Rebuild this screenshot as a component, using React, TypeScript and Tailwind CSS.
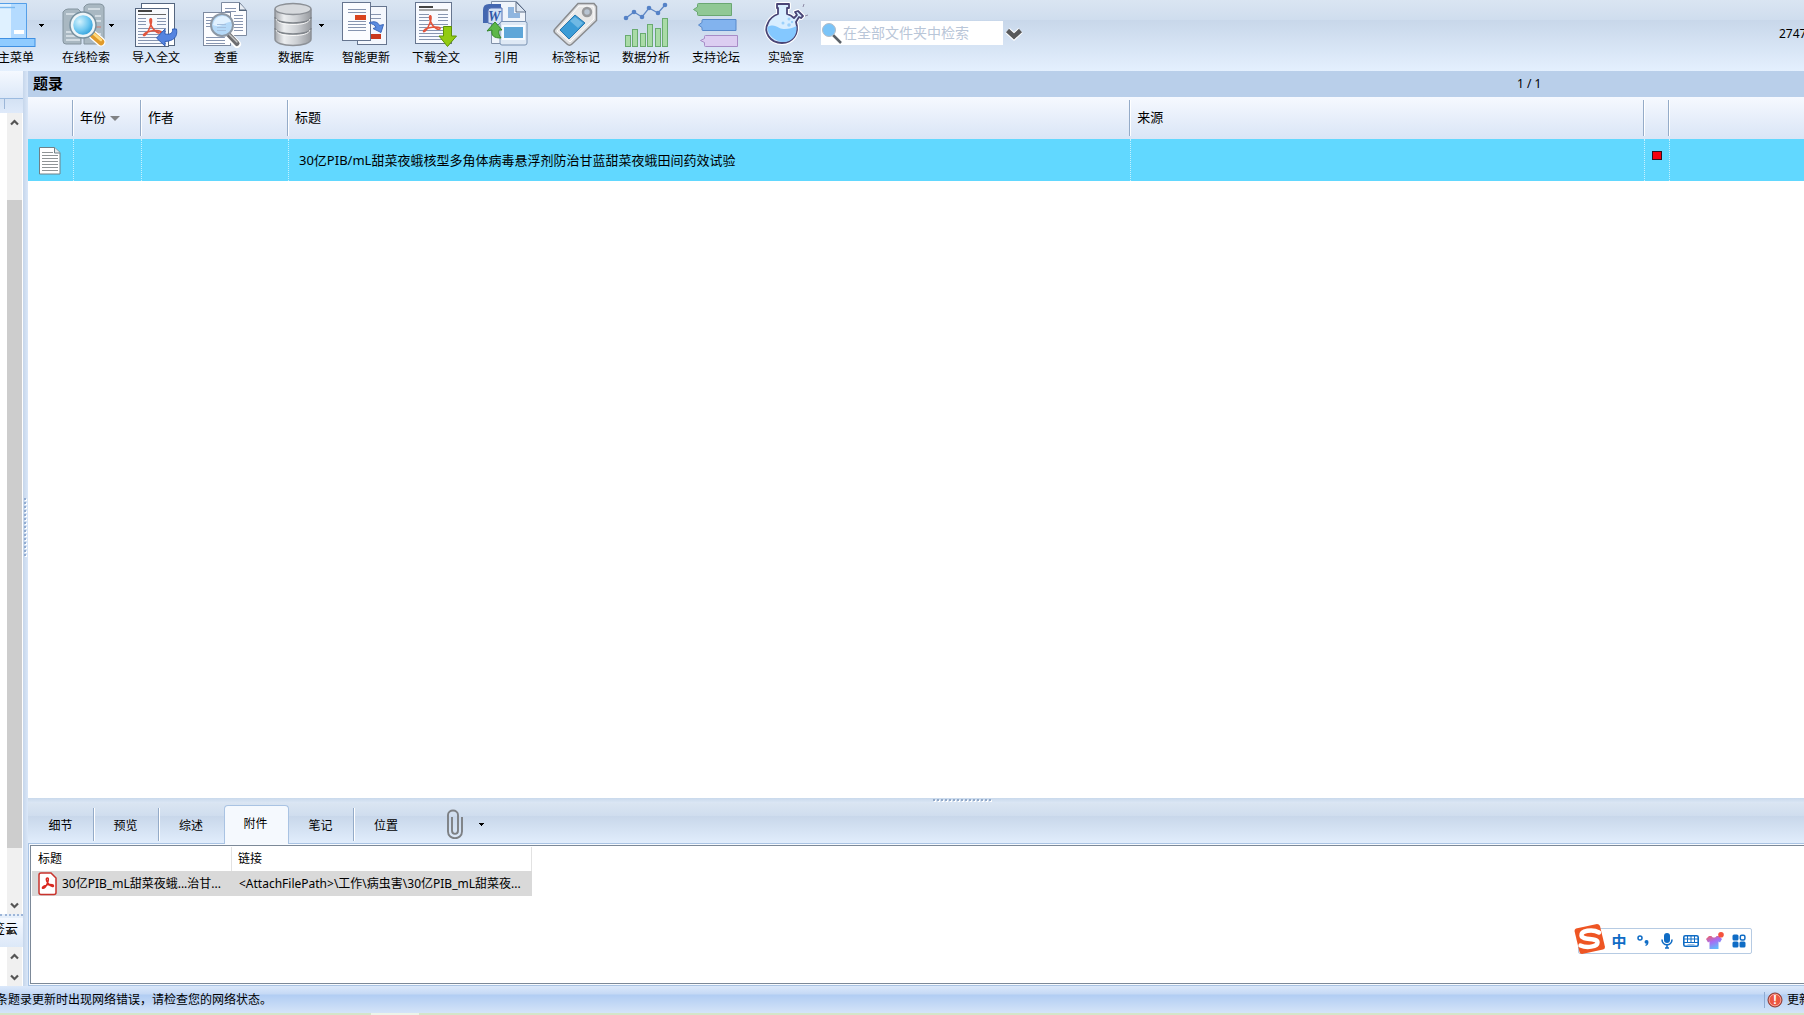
import { useId } from "react";
import type { ReactNode } from "react";

function Icon({ children }: { children: ReactNode }) {
  return (
    <svg viewBox="0 0 48 48" className="h-12 w-12 shrink-0" aria-hidden="true">
      {children}
    </svg>
  );
}

function Caret() {
  return (
    <svg viewBox="0 0 5 3" className="h-[3px] w-[5px] shrink-0 self-center" shapeRendering="crispEdges" aria-hidden="true">
      <path d="M0 0h5v1H0zM1 1h3v1H1zM2 2h1v1H2z" fill="#000" />
    </svg>
  );
}

function AcrobatMark({ x, y, s = 1, color = "#e2543c" }: { x: number; y: number; s?: number; color?: string }) {
  return (
    <g transform={`translate(${x} ${y}) scale(${s})`} fill="none" stroke={color} strokeLinecap="round" strokeLinejoin="round">
      <path d="M8 0.8c-1.6-.4-1.2 2.6-.4 5.2 1 3 3.500 6.400 6.400 8.200 2.800 1.600 5 .4 3.600-.8-2.200-1.400-8.800-1-13 .6-3.400 1.300-5 3.400-3.600 3.600 1.800 0 4.400-4.600 6-8.600C8.600 5.500 9 1.200 8 .8z" strokeWidth="1.600" />
    </g>
  );
}

/* Three-lobed loop mark used on the PDF file badge. */
function PdfBadge() {
  return (
    <svg viewBox="0 0 19 24" className="h-6 w-[19px] shrink-0" aria-hidden="true">
      <path d="M3 1h10L18 6V20.500q0 2-2 2H3q-2 0-2-2V3q0-2 2-2z" fill="#fff" stroke="#c9332c" strokeWidth="1.500" />
      <path
        d="M9.500 6c-1.800 0-1.300 2.600.2 4.800 1.300 1.900 3 3.600 4.700 3.800 1.500.1 1.400-1.500-.2-1.800-2.600-.5-6 .1-8.300 1.300-1.800.9-1.900 2.400-.7 2.200 1.500-.3 3.600-3.400 4.500-5.800.7-2 1-4.500-.2-4.500z"
        fill="none"
        stroke="#d9281f"
        strokeWidth="1.500"
        strokeLinejoin="round"
      />
    </svg>
  );
}

function MainMenuIcon() {
  return (
    <Icon>
      <path d="M0 3h36v36H0z" fill="#b4dbff" />
      <path d="M0 3h20v36H0z" fill="#dff1ff" />
      <path d="M0 3.500h35.500v36" fill="none" stroke="#559fe8" />
      <path d="M9 7.500h15" stroke="#7bb8ef" strokeWidth="1.400" />
      <rect x="23" y="30" width="10" height="4" fill="#fff" />
      <rect x="-2" y="38.500" width="46" height="8" fill="#8fcbff" stroke="#3f90e2" />
    </Icon>
  );
}

function OnlineSearchIcon() {
  const g = useId();
  return (
    <Icon>
      <defs>
        <radialGradient id={g} cx="0.350" cy="0.350" r="0.700">
          <stop offset="0" stopColor="#d3f2fd" />
          <stop offset="0.600" stopColor="#6cc6f0" />
          <stop offset="1" stopColor="#2a9bd8" />
        </radialGradient>
      </defs>
      <path d="M2 12q2-3 5-3h10l3 3v32H5q-3 0-3-3z" fill="#a9b8c2" stroke="#84949f" />
      <path d="M23 7q2-3 5-3h11q3 0 4 3v34q0 2-3 3H23z" fill="#a9b8c2" stroke="#84949f" />
      <path d="M5 14h11M5 32h8M5 36h12M5 40h14M27 9h12M34 16h6M35 21h5M35 34h5" stroke="#dfe8ee" strokeWidth="1.600" />
      <path d="M35 27h5" stroke="#d0786c" />
      <path d="M32 35l8 7" stroke="#fff" strokeWidth="9" strokeLinecap="round" />
      <path d="M32 35l8 7" stroke="#e09a2b" strokeWidth="6.500" strokeLinecap="round" />
      <path d="M33 34l7 6" stroke="#ffd97c" strokeWidth="2.500" strokeLinecap="round" />
      <circle cx="22" cy="25" r="11.500" fill="none" stroke="#76909f" strokeWidth="4.500" />
      <circle cx="22" cy="25" r="11" fill={`url(#${g})`} stroke="#eef5f8" strokeWidth="2.500" />
    </Icon>
  );
}

function PaperLines({ x, y, w, n, gap = 3 }: { x: number; y: number; w: number; n: number; gap?: number }) {
  return (
    <g stroke="#8795b0">
      {Array.from({ length: n }, (_, i) => (
        <path key={i} d={`M${x} ${y + i * gap + 0.5}h${w}`} />
      ))}
    </g>
  );
}

function ImportIcon() {
  return (
    <Icon>
      <rect x="10.500" y="3.500" width="33" height="42" fill="#fff" stroke="#55667f" />
      <rect x="4.500" y="8.500" width="33" height="38" fill="#f7f9fd" stroke="#55667f" />
      <path d="M7 11h14" stroke="#444" strokeWidth="2" />
      <path d="M7 14.500h28" stroke="#666" />
      <PaperLines x={7} y={18} w={8} n={3} />
      <PaperLines x={26} y={18} w={9} n={3} />
      <PaperLines x={7} y={28} w={28} n={6} />
      <AcrobatMark x={12} y={18} />
      <path d="M25.500 38l8.500-9v5c5.500 1 8-1 7.500-5h4c1.500 8-3 12-11.500 12.500V46z" fill="#5584e0" stroke="#3360b8" strokeLinejoin="round" />
    </Icon>
  );
}

function DuplicateIcon() {
  return (
    <Icon>
      <path d="M20.500 2.500h18l7 8v25h-25z" fill="#fdfdff" stroke="#7d8aa0" />
      <path d="M38 2v9h8z" fill="#55667c" />
      <path d="M39 3.500v6h5.500z" fill="#e9eef5" />
      <PaperLines x={24} y={8} w={11} n={2} />
      <PaperLines x={33} y={15} w={9} n={6} />
      <rect x="2.500" y="12.500" width="27" height="33" fill="#fdfdff" stroke="#7d8aa0" />
      <PaperLines x={5} y={17} w={10} n={4} />
      <PaperLines x={5} y={37} w={19} n={3} />
      <path d="M27 35l9 9" stroke="#fff" strokeWidth="8" strokeLinecap="round" />
      <path d="M28 35l8 8.500" stroke="#6d6d70" strokeWidth="5" strokeLinecap="round" />
      <path d="M28 34l8 8" stroke="#c4c4c4" strokeWidth="1.500" strokeLinecap="round" />
      <circle cx="21" cy="25" r="11" fill="#b5d9f8" stroke="#8d98a5" strokeWidth="2" />
      <path d="M12 25c1-6 5-9 10-9 4 0 7 3 8 6-6-1-10 7-18 3z" fill="#e1f1ff" />
      <path d="M16 24.500h9M16 27.500h9M16 30.500h9" stroke="#a5bfdd" />
    </Icon>
  );
}

function DatabaseIcon() {
  const g = useId();
  return (
    <Icon>
      <defs>
        <linearGradient id={g}>
          <stop offset="0" stopColor="#a6a9ae" />
          <stop offset="0.250" stopColor="#eceef0" />
          <stop offset="0.600" stopColor="#cdd0d4" />
          <stop offset="1" stopColor="#989ba0" />
        </linearGradient>
      </defs>
      <path d="M4 10v29c0 4 8 6.500 18 6.500s18-2.500 18-6.500V10z" fill={`url(#${g})`} stroke="#8c9096" strokeWidth="1.500" />
      <ellipse cx="22" cy="9" rx="18" ry="5.500" fill="#d6d9dd" stroke="#8c9096" strokeWidth="1.500" />
      <path d="M4 17c0 4 8 6 18 6s18-2 18-6M4 28c0 4 8 6 18 6s18-2 18-6" fill="none" stroke="#80858b" strokeWidth="1.500" />
      <path d="M5 19c1 4 8 5.500 17 5.500s16-1.500 17-5.500M5 30c1 4 8 5.500 17 5.500s16-1.500 17-5.500" fill="none" stroke="#f8f8f8" />
    </Icon>
  );
}

function UpdateIcon() {
  return (
    <Icon>
      <rect x="16.500" y="6.500" width="29" height="38" fill="#f4f7fd" stroke="#66758f" />
      <PaperLines x={30} y={14} w={10} n={2} gap={4} />
      <rect x="30" y="34" width="10" height="5" fill="#c9381c" />
      <rect x="1.500" y="2.500" width="28" height="38" fill="#fbfcff" stroke="#66758f" />
      <PaperLines x={7} y={9} w={18} n={2} />
      <rect x="14" y="15" width="11" height="5" fill="#d9441f" />
      <PaperLines x={7} y={21} w={18} n={4} />
      <path d="M28 23c5-2.500 9-1 10.500 2.500l4-1-2.500 8-8-4 3-1c-1-2.500-3-3.500-7-4.500z" fill="#5a8be0" stroke="#3e69ba" strokeLinejoin="round" />
    </Icon>
  );
}

function DownloadIcon() {
  return (
    <Icon>
      <rect x="4.500" y="2.500" width="36" height="41" fill="#f8faff" stroke="#66758f" />
      <path d="M8 7h14" stroke="#444" strokeWidth="2" />
      <path d="M8 10h29" stroke="#888" strokeWidth="1.500" />
      <PaperLines x={8} y={14} w={10} n={3} />
      <PaperLines x={27} y={14} w={10} n={3} />
      <PaperLines x={8} y={24} w={29} n={6} />
      <AcrobatMark x={12} y={15} s={0.95} />
      <path d="M32.500 26.500h8V36h5L36.500 46.500 28 36h4.500z" fill="#92cb12" stroke="#5d9205" strokeLinejoin="round" />
    </Icon>
  );
}

function CiteIcon() {
  return (
    <Icon>
      <path d="M10.500 1.500h25l9 10v32h-34z" fill="#eff4fb" stroke="#8090a8" />
      <path d="M35 2v10h10z" fill="#dce6f3" stroke="#5c6c85" />
      <path d="M27 7h6v6h6v5H27z" fill="#8fb5df" />
      <path d="M2 23V10q0-6 6-6h12v4H10q-3 0-3 4v11z" fill="#4467b0" />
      <path d="M7 23V11q0-3 3-3h11v13l-4 4z" fill="#d3e1f6" stroke="#5471b4" />
      <text x="7" y="21" fontFamily="Liberation Serif" fontSize="14" fontWeight="bold" fontStyle="italic" fill="#2f57a8">W</text>
      <rect x="19" y="21.500" width="27" height="23.500" rx="2" fill="#dfe9f5" stroke="#7a93b3" />
      <rect x="22" y="26" width="21" height="13" fill="#5ea6d8" stroke="#f5faff" strokeWidth="2" />
      <path d="M6 31l8-9 7 8h-3c-1 3 0 5 2 8-7 0-10-2-9-8z" fill="#5db749" stroke="#35882a" strokeLinejoin="round" />
    </Icon>
  );
}

function TagIcon() {
  return (
    <Icon>
      <path d="M27 3.500h16l2.500 3v14L21 44q-2.500 2.500-5 0L4 33q-2-2 0-4z" fill="#dcdddf" stroke="#898b8e" strokeWidth="1.500" />
      <path d="M28 6h14l1 2v11L19 42 6 31z" fill="#e8e8e8" stroke="#fff" />
      <circle cx="36" cy="12" r="4" fill="#b8c4d2" stroke="#97999c" strokeWidth="2.500" />
      <path d="M24 15l10 8-16 16-9-9z" fill="#3c9cd6" stroke="#2878b0" />
      <path d="M24 17l8 6-5 5-8-7z" fill="#6fb9e4" />
    </Icon>
  );
}

function AnalysisIcon() {
  return (
    <Icon>
      <path d="M5 18l8-6 8 5 7-9 9 5 7-8" fill="none" stroke="#5d86c4" strokeWidth="1.300" />
      {[[5, 18], [13, 12], [21, 17], [28, 8], [37, 13], [44, 5]].map(([x, y]) => (
        <circle key={x} cx={x} cy={y} r="2.300" fill="#5582c7" />
      ))}
      <g fill="#a9dba7" stroke="#69ab70">
        <rect x="4.500" y="35.500" width="5" height="11" />
        <rect x="11.500" y="29.500" width="5" height="17" />
        <rect x="19.500" y="33.500" width="5" height="13" />
        <rect x="26.500" y="24.500" width="5" height="22" />
        <rect x="34.500" y="28.500" width="5" height="18" />
        <rect x="41.500" y="18.500" width="5" height="28" />
      </g>
    </Icon>
  );
}

function ForumIcon() {
  return (
    <Icon>
      <path d="M2.500 9.500l4-2.500V4.500q0-1 1-1h33v12h-33q-1 0-1-1V12z" fill="#90c895" stroke="#6aa772" />
      <path d="M7.500 25l3.500-2.500V20.500q0-1 1-1h33v11h-33q-1 0-1-1V27.500z" fill="#82b3ee" stroke="#5889cb" />
      <path d="M9.500 40.500l4-2V36.500q0-1 1-1h32v11h-32q-1 0-1-1V42.500z" fill="#dccdf1" stroke="#a78cc6" />
    </Icon>
  );
}

function LabIcon() {
  return (
    <Icon>
      <path d="M16 4h12v4h-2v6c4 1 6 3 7 4l3-3-2-3 3-1 5 5-2 2-2-1-3 5c4 12-4 21-14 21C9 43 2 32 7 23c2-5 5-7 10-9V8h-1z" fill="#e9f5ff" stroke="#fff" strokeWidth="4" strokeLinejoin="round" />
      <path d="M16 4h12v4h-2v6c4 1 6 3 7 4l3-3-2-3 3-1 5 5-2 2-2-1-3 5c4 12-4 21-14 21C9 43 2 32 7 23c2-5 5-7 10-9V8h-1z" fill="#d8edff" stroke="#494475" strokeWidth="1.800" strokeLinejoin="round" />
      <path d="M6.500 27c5-3 8-1 12 1s12 1 17-2c1 10-5 16-13 16S6 35 6.500 27z" fill="#84c8ff" />
      <g fill="#9cd1fb"><circle cx="22" cy="23" r="1.500" /><circle cx="28" cy="25" r="1.800" /><circle cx="28" cy="19" r="1.500" /><circle cx="31" cy="22" r="1.200" /></g>
      <path d="M42 7l1-3M44 16l3-1" stroke="#8e8aa5" />
    </Icon>
  );
}

const tools = [
  { label: "主菜单", icon: <MainMenuIcon />, caret: true },
  { label: "在线检索", icon: <OnlineSearchIcon />, caret: true },
  { label: "导入全文", icon: <ImportIcon />, caret: false },
  { label: "查重", icon: <DuplicateIcon />, caret: false },
  { label: "数据库", icon: <DatabaseIcon />, caret: true },
  { label: "智能更新", icon: <UpdateIcon />, caret: false },
  { label: "下载全文", icon: <DownloadIcon />, caret: false },
  { label: "引用", icon: <CiteIcon />, caret: false },
  { label: "标签标记", icon: <TagIcon />, caret: false },
  { label: "数据分析", icon: <AnalysisIcon />, caret: false },
  { label: "支持论坛", icon: <ForumIcon />, caret: false },
  { label: "实验室", icon: <LabIcon />, caret: false },
];

function Toolbar() {
  return (
    <header className="flex h-[71px] shrink-0 bg-[linear-gradient(to_bottom,#dae5f2_0px,#cfddee_20px,#c8d7ea_20px,#e4f0fe_71px)]">
      <nav className="-ml-[19px] flex">
        {tools.map((t) => (
          <button key={t.label} type="button" className="flex w-[70px] shrink-0 flex-col text-xs leading-4">
            <span className="flex h-[50px] w-full items-start pl-[10px]">
              {t.icon}
              {t.caret && <Caret />}
            </span>
            <span className="w-full text-center">{t.label}</span>
          </button>
        ))}
      </nav>
      <div className="flex h-[66px] items-center">
        <label className="flex h-6 w-[182px] items-center bg-white">
          <svg viewBox="0 0 22 24" className="h-6 w-[22px] shrink-0" aria-hidden="true">
            <path d="M12 14l8 8" stroke="#596067" strokeWidth="2.500" />
            <circle cx="8" cy="9" r="6.500" fill="#7ac4f8" stroke="#b4bcc6" />
          </svg>
          <input
            type="text"
            aria-label="检索"
            placeholder="在全部文件夹中检索"
            className="h-6 w-full min-w-0 bg-transparent pb-0.5 text-sm leading-5 outline-none placeholder:text-[#b9c6d8]"
          />
        </label>
        <button type="button" aria-label="检索选项" className="ml-0.5 pt-0.5">
          <svg viewBox="0 0 18 14" className="h-[14px] w-[18px]" aria-hidden="true">
            <path d="M2.500 3.500L9 9.500l6.500-6" fill="none" stroke="#fff" strokeWidth="6.500" />
            <path d="M2.500 3.500L9 9.500l6.500-6" fill="none" stroke="#58595b" strokeWidth="4.500" />
          </svg>
        </button>
      </div>
      <div className="ml-auto w-[25px] pt-[26px] text-xs leading-4 whitespace-nowrap">2747</div>
    </header>
  );
}

function ScrollArrow({ down, label }: { down?: boolean; label: string }) {
  return (
    <button type="button" aria-label={label} className="flex h-[18px] w-[15px] shrink-0 items-center justify-center">
      <svg viewBox="0 0 9 7" className="h-[7px] w-[9px]" aria-hidden="true">
        <path d={down ? "M1 1.500l3.500 3.500L8 1.500" : "M1 5.500L4.500 2 8 5.500"} fill="none" stroke="#555" strokeWidth="2.200" />
      </svg>
    </button>
  );
}

function SidePanel() {
  return (
    <aside className="flex w-[23px] shrink-0 flex-col bg-white">
      <div className="h-[27px] shrink-0 bg-linear-to-b from-[#f5f9ff] to-[#dce8f8]" />
      <div className="flex h-[15px] shrink-0 border-t border-[#9cbbe0] bg-linear-to-b from-[#d4e2f4] to-[#dfeafa]">
        <div className="mb-1 w-[5px] border-r border-[#9cb6d8]" />
      </div>
      <div className="flex min-h-0 flex-1 pl-[7px]">
        <div className="flex w-[15px] flex-col bg-[#f0f0f0]">
          <ScrollArrow label="向上滚动" />
          <div className="h-[69px] shrink-0" />
          <div className="min-h-0 flex-1 bg-[#cdcdcd]" />
          <div className="h-12 shrink-0" />
          <ScrollArrow down label="向下滚动" />
        </div>
      </div>
      <div className="h-1 shrink-0 border-t-2 border-dotted border-[#9db5d8] bg-[#e6effa]" />
      <div className="relative flex h-[29px] shrink-0 items-start justify-end overflow-hidden bg-linear-to-b from-[#f5f9ff] to-[#dce8f8] pr-[5px]">
        <span className="text-[13px] leading-5 whitespace-nowrap">标签云</span>
        <svg viewBox="0 0 8 5" className="absolute top-3 left-[6px] h-[5px] w-2" aria-hidden="true">
          <path d="M0 0h8L4 5z" fill="#333" />
        </svg>
      </div>
      <div className="flex h-[39px] shrink-0 pl-[7px]">
        <div className="flex w-[15px] flex-col justify-between bg-[#f0f0f0]">
          <ScrollArrow label="标签云向上滚动" />
          <ScrollArrow down label="标签云向下滚动" />
        </div>
      </div>
    </aside>
  );
}

const gripDots = Array.from({ length: 15 }, (_, i) => i);

function VerticalSplitter() {
  return (
    <div className="flex w-[5px] shrink-0 flex-col items-center justify-center gap-0.5 bg-linear-to-r from-[#c6d6eb] to-[#dae7f8] pr-px pb-1">
      {gripDots.map((i) => (
        <span key={i} className="h-0.5 w-0.5 bg-[#92acd0] shadow-[1px_1px_0_#fff]" />
      ))}
    </div>
  );
}

function HorizontalSplitter() {
  return (
    <div className="flex h-[5px] shrink-0 items-start justify-center gap-0.5 bg-linear-to-b from-[#c9d9ec] to-[#dce7f5] pt-px pl-[92px]">
      {gripDots.map((i) => (
        <span key={i} className="h-0.5 w-0.5 bg-[#92a9c9] shadow-[1px_1px_0_#fff]" />
      ))}
    </div>
  );
}

function HeadCell({ className, children }: { className: string; children?: ReactNode }) {
  return (
    <th className={`h-[42px] p-0 text-left font-normal ${className}`}>
      <div className="flex h-9 items-center gap-1 border-r border-[#94abc8] pb-0.5 pl-[7px] shadow-[1px_0_0_#fff]">{children}</div>
    </th>
  );
}

function RecordTable() {
  const cell = "h-[42px] p-0 border-l border-dotted border-[#c5f1ff]";
  return (
    <table className="w-full table-fixed border-separate border-spacing-0 text-[13px] leading-5">
      <thead className="bg-linear-to-b from-[#f6f9ff] to-[#d9e5f6]">
        <tr>
          <HeadCell className="w-[45px]" />
          <HeadCell className="w-[68px]">
            年份
            <svg viewBox="0 0 10 5" className="mt-0.5 h-[5px] w-[10px]" aria-hidden="true"><path d="M0 0h10L5 5z" fill="#808285" /></svg>
          </HeadCell>
          <HeadCell className="w-[147px]">作者</HeadCell>
          <HeadCell className="w-[47.430%]">标题</HeadCell>
          <HeadCell className="w-[28.900%]">来源</HeadCell>
          <HeadCell className="w-[25px]" />
          <th className="p-0" aria-label="其他" />
        </tr>
      </thead>
      <tbody>
        <tr className="bg-[#61d8ff]">
          <td className="h-[42px] p-0 pl-[11px]">
            <svg viewBox="0 0 22 29" className="h-[29px] w-[22px]" aria-hidden="true">
              <path d="M.500 1.500h15l5.500 5V28H.500z" fill="#fff" stroke="#6f8087" />
              <path d="M15.500 1.500v5.500H21" fill="#e5e9ea" stroke="#6f8087" />
              <path d="M3 6.500h11M3 9.500h16M3 12.500h16M3 15.500h16M3 18.500h16M3 21.500h16M3 24.500h16" stroke="#8f9496" />
            </svg>
          </td>
          <td className={cell} />
          <td className={cell} />
          <td className={`${cell} pl-[10px] whitespace-nowrap`}>30亿PIB/mL甜菜夜蛾核型多角体病毒悬浮剂防治甘蓝甜菜夜蛾田间药效试验</td>
          <td className={cell} />
          <td className={`${cell} align-top`}>
            <div className="mx-auto mt-3 h-[9px] w-[10px] border border-[#32101c] bg-[#f5000c]" />
          </td>
          <td className={cell} />
        </tr>
      </tbody>
    </table>
  );
}

const tabs = ["细节", "预览", "综述", "附件", "笔记", "位置"];

function DetailTabs() {
  return (
    <div className="flex h-[41px] shrink-0 items-end border-b border-[#a9c3e3] bg-[linear-gradient(to_bottom,#dae5f2_0px,#cfddee_13px,#c8d7ea_13px,#e1edfc_40px)]">
      <div role="tablist" className="flex items-end pl-px text-xs leading-4">
        {tabs.map((t) =>
          t === "附件" ? (
            <button key={t} type="button" role="tab" aria-selected="true" className="-mb-px h-[39px] w-[65px] rounded-t-sm border border-b-0 border-[#a9c3e3] bg-[#f5f9fe] pr-0.5 pb-0.5">
              {t}
            </button>
          ) : (
            <button key={t} type="button" role="tab" aria-selected="false" className="h-[35px] w-[65px] pb-0.5">
              <span className={`flex h-[33px] items-center justify-center pt-0.5 pr-px ${t === "综述" || t === "位置" ? "" : "border-r border-[#94abc8] shadow-[1px_0_0_#fff]"}`}>{t}</span>
            </button>
          ),
        )}
      </div>
      <button type="button" aria-label="添加附件" className="ml-[28px] flex h-[38px] items-center gap-4">
        <svg viewBox="0 0 16 30" className="h-[30px] w-4" fill="none" stroke="#7d8084" strokeWidth="1.900" aria-hidden="true">
          <path d="M15 8v14.500c0 9-14 9-14 0V6C1 0 11 0 11 6v15.500c0 4.500-6 4.500-6 0V8" />
        </svg>
        <Caret />
      </button>
    </div>
  );
}

function AttachmentPanel() {
  return (
    <section className="h-[142px] shrink-0 border-b border-l border-[#a9c3e3] bg-[#f8fbff] py-px pl-px">
      <div className="h-full border border-r-0 border-[#7c8998] bg-white pt-px pl-px">
        <table className="w-[500px] table-fixed border-separate border-spacing-0 text-xs leading-4">
          <thead>
            <tr>
              <th className="h-6 w-[200px] border-r border-[#e2e2e2] p-0 pl-[6px] text-left font-normal">标题</th>
              <th className="border-r border-[#e2e2e2] p-0 pl-[6px] text-left font-normal">链接</th>
            </tr>
          </thead>
          <tbody>
            <tr className="bg-[#d9d9d9]">
              <td className="h-[25px] p-0 pl-[6px]">
                <span className="flex items-center gap-[5px] whitespace-nowrap">
                  <PdfBadge />
                  30亿PIB_mL甜菜夜蛾...治甘...
                </span>
              </td>
              <td className="overflow-hidden p-0 pl-[7px] whitespace-nowrap">&lt;AttachFilePath&gt;\工作\病虫害\30亿PIB_mL甜菜夜...</td>
            </tr>
          </tbody>
        </table>
      </div>
    </section>
  );
}

function StatusBar() {
  return (
    <footer className="shrink-0">
      <div className="flex h-[27px] items-center bg-[linear-gradient(to_bottom,#dbe8fa_0px,#c5d9f5_8px,#b1cdf3_9px,#d5e4f8_27px)] text-xs leading-4 whitespace-nowrap">
        <span className="-ml-1">条题录更新时出现网络错误，请检查您的网络状态。</span>
        <div className="ml-auto flex w-10 items-center border-l border-[#8fabd2] pl-0.5">
          <svg viewBox="0 0 16 16" className="h-4 w-4 shrink-0" aria-hidden="true">
            <circle cx="8" cy="8" r="7" fill="#ec5642" stroke="#7f3a38" />
            <circle cx="8" cy="8" r="5.800" fill="none" stroke="#f7a294" />
            <text x="8" y="12" textAnchor="middle" fontFamily="Liberation Sans" fontWeight="bold" fontSize="12" fill="#fff">!</text>
          </svg>
          <span className="ml-1">更新</span>
        </div>
      </div>
      <div className="flex h-0.5 bg-[#d4e5c9] pl-[371px]">
        <div className="w-12 bg-[#edf4e8]" />
      </div>
    </footer>
  );
}

function InputMethodBar() {
  const g = useId();
  const item = "flex h-6 w-6 items-center justify-center";
  return (
    <div className="absolute right-[52px] bottom-[61px] flex h-[26px] items-center rounded-xs border border-[#b6cbe3] bg-white pl-7 text-[#0f6cc5]">
      <svg viewBox="0 0 32 32" className="absolute -top-[6px] -left-[5px] h-8 w-8" aria-hidden="true">
        <path d="M2 5.500L23 1q2 0 3 2l5 21q0 2-2 2.500L8 31q-2 0-2.500-2L.500 8q0-2 1.500-2.500z" fill="#ee5523" />
        <path d="M25 9.500C18 5.500 7 8 7.500 12.500c.5 5 16 2 16 7 0 4.500-11 5.500-17 3" fill="none" stroke="#fff" strokeWidth="4.500" strokeLinecap="round" />
      </svg>
      <button type="button" className={`${item} text-[15px] leading-5 font-bold`}>中</button>
      <button type="button" aria-label="标点" className={item}>
        <svg viewBox="0 0 14 14" className="h-[14px] w-[14px]" aria-hidden="true">
          <circle cx="4" cy="4" r="2" fill="none" stroke="currentColor" strokeWidth="1.500" />
          <path d="M10.500 6a2 2 0 0 1 2 2.200c0 2-1.200 3.300-2.800 3.800l-.400-1c1-.400 1.400-.900 1.400-1.400A1.900 1.900 0 0 1 8.500 8a2 2 0 0 1 2-2z" fill="currentColor" />
        </svg>
      </button>
      <button type="button" aria-label="语音" className={item}>
        <svg viewBox="0 0 14 16" className="h-4 w-[14px]" aria-hidden="true">
          <rect x="4" y="0" width="6" height="10" rx="3" fill="currentColor" />
          <path d="M2 6.500c0 7 10 7 10 0M7 12v3M5 15h4" fill="none" stroke="currentColor" strokeWidth="1.600" />
        </svg>
      </button>
      <button type="button" aria-label="键盘" className={item}>
        <svg viewBox="0 0 16 12" className="h-3 w-4" aria-hidden="true">
          <rect x=".800" y=".800" width="14.400" height="10.400" rx="1.500" fill="#fff" stroke="currentColor" strokeWidth="1.600" />
          <path d="M1 4h14M1 7.500h14M4.500 1v7M8 1v7M11.500 1v7" stroke="currentColor" />
          <path d="M4.500 9.500h7" stroke="#9dc3e8" />
        </svg>
      </button>
      <button type="button" aria-label="皮肤" className={item}>
        <svg viewBox="0 0 18 18" className="h-[18px] w-[18px]" aria-hidden="true">
          <defs>
            <linearGradient id={g} x1="0" y1="0" x2=".500" y2="1">
              <stop offset="0" stopColor="#f2605a" />
              <stop offset=".500" stopColor="#a86cf2" />
              <stop offset="1" stopColor="#62b8fb" />
            </linearGradient>
          </defs>
          <path d="M0 7l3-3h2.500c1 2 4 2 5 0H13l3 3-2 3.500-1.500-1V17h-9V9.500L2 10.500z" fill={`url(#${g})`} />
          <circle cx="15" cy="2.800" r="2.800" fill="#f5523d" />
        </svg>
      </button>
      <button type="button" aria-label="工具箱" className={item}>
        <svg viewBox="0 0 14 14" className="h-[14px] w-[14px]" fill="currentColor" aria-hidden="true">
          <rect x=".500" y=".500" width="6" height="6" rx="1.500" />
          <rect x="8.300" y="1.300" width="4.600" height="4.600" rx="1.500" fill="none" stroke="currentColor" strokeWidth="1.500" />
          <rect x=".500" y="7.500" width="6" height="6" rx="1.500" />
          <rect x="7.500" y="7.500" width="6" height="6" rx="1.500" />
        </svg>
      </button>
    </div>
  );
}

export default function App() {
  return (
    <div className="relative flex h-screen flex-col overflow-hidden bg-white font-['Noto_Sans','Noto_Sans_CJK_SC',sans-serif] text-black">
      <Toolbar />
      <div className="flex min-h-0 flex-1">
        <SidePanel />
        <VerticalSplitter />
        <main className="flex min-w-0 flex-1 flex-col">
          <div className="flex h-[26px] shrink-0 items-center justify-between bg-[#b9cfea] pl-[5px]">
            <h1 className="pb-0.5 text-[15px] leading-5 font-bold">题录</h1>
            <span className="w-[287px] text-xs leading-4">1 / 1</span>
          </div>
          <div className="min-h-0 flex-1">
            <RecordTable />
          </div>
          <HorizontalSplitter />
          <DetailTabs />
          <AttachmentPanel />
        </main>
      </div>
      <StatusBar />
      <InputMethodBar />
    </div>
  );
}
